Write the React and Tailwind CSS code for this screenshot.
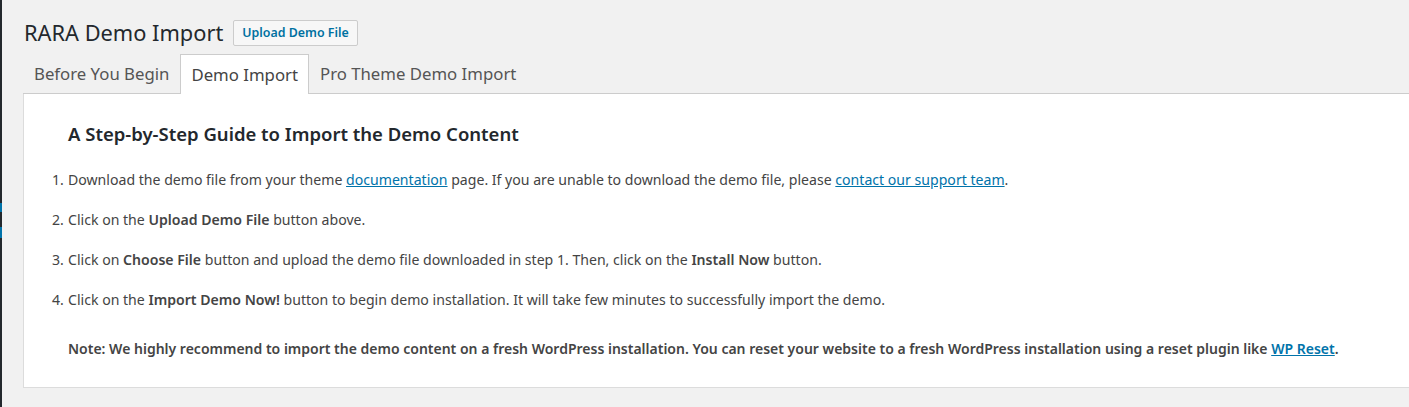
import React from "react";

const tabBase = "h-[39px] flex items-center px-[10px] text-[16.75px] border border-b-0";

export default function App() {
  return (
    <div className="min-h-[407px] bg-[#f1f1f1] flex font-['Noto_Sans',sans-serif] text-[#444]">
      <div className="w-[2px] flex flex-col">
        <div className="h-[203px] bg-[#23282d]" />
        <div className="h-[9px] bg-[#0073aa]" />
        <div className="h-[15px] bg-[#23282d]" />
        <div className="h-[11px] bg-[#0073aa]" />
        <div className="flex-1 bg-[#23282d]" />
      </div>
      <div className="flex-1 pl-[21px] flex flex-col">
        <div className="flex items-center pt-[20px] pl-[1px] gap-[10px]">
          <h1 className="text-[21.8px] leading-[26px] text-[#23282d] font-normal">RARA Demo Import</h1>
          <button className="h-[26px] px-[8px] border border-[#ccc] bg-[#f7f7f7] rounded-[2px] text-[12.4px] font-semibold text-[#0071a1]">
            Upload Demo File
          </button>
        </div>
        <div className="mt-[8px] flex border-b border-[#ccc]">
          <div className={`${tabBase} border-transparent text-[#555]`}>Before You Begin</div>
          <div className={`${tabBase} border-[#ccc] bg-white text-[#444] -mb-px h-[40px]`}>Demo Import</div>
          <div className={`${tabBase} border-transparent text-[#555]`}>Pro Theme Demo Import</div>
        </div>
        <div className="bg-white border-l border-b border-[#dcdcdc] pt-[26px] pb-[28px] pl-[28px]">
          <h2 className="pl-[16px] text-[18.5px] leading-[28px] font-semibold text-[#23282d]">
            A Step-by-Step Guide to Import the Demo Content
          </h2>
          <ol className="mt-[22px] text-[14.1px] leading-[20px] flex flex-col gap-[20px]">
            <li className="flex">
              <span className="w-[16px] shrink-0">1.</span>
              <span>
                Download the demo file from your theme{" "}
                <a href="#" className="text-[#0073aa] underline">documentation</a> page. If you are unable to
                download the demo file, please{" "}
                <a href="#" className="text-[#0073aa] underline">contact our support team</a>.
              </span>
            </li>
            <li className="flex">
              <span className="w-[16px] shrink-0">2.</span>
              <span>
                Click on the <b className="font-semibold">Upload Demo File</b> button above.
              </span>
            </li>
            <li className="flex">
              <span className="w-[16px] shrink-0">3.</span>
              <span>
                Click on <b className="font-semibold">Choose File</b> button and upload the demo file downloaded in
                step 1. Then, click on the <b className="font-semibold">Install Now</b> button.
              </span>
            </li>
            <li className="flex">
              <span className="w-[16px] shrink-0">4.</span>
              <span>
                Click on the <b className="font-semibold">Import Demo Now!</b> button to begin demo installation. It
                will take few minutes to successfully import the demo.
              </span>
            </li>
          </ol>
          <p className="mt-[29px] pl-[16px] text-[14px] leading-[20px] font-semibold">
            Note: We highly recommend to import the demo content on a fresh WordPress installation. You can reset your
            website to a fresh WordPress installation using a reset plugin like{" "}
            <a href="#" className="text-[#0073aa] underline">WP Reset</a>.
          </p>
        </div>
      </div>
    </div>
  );
}
